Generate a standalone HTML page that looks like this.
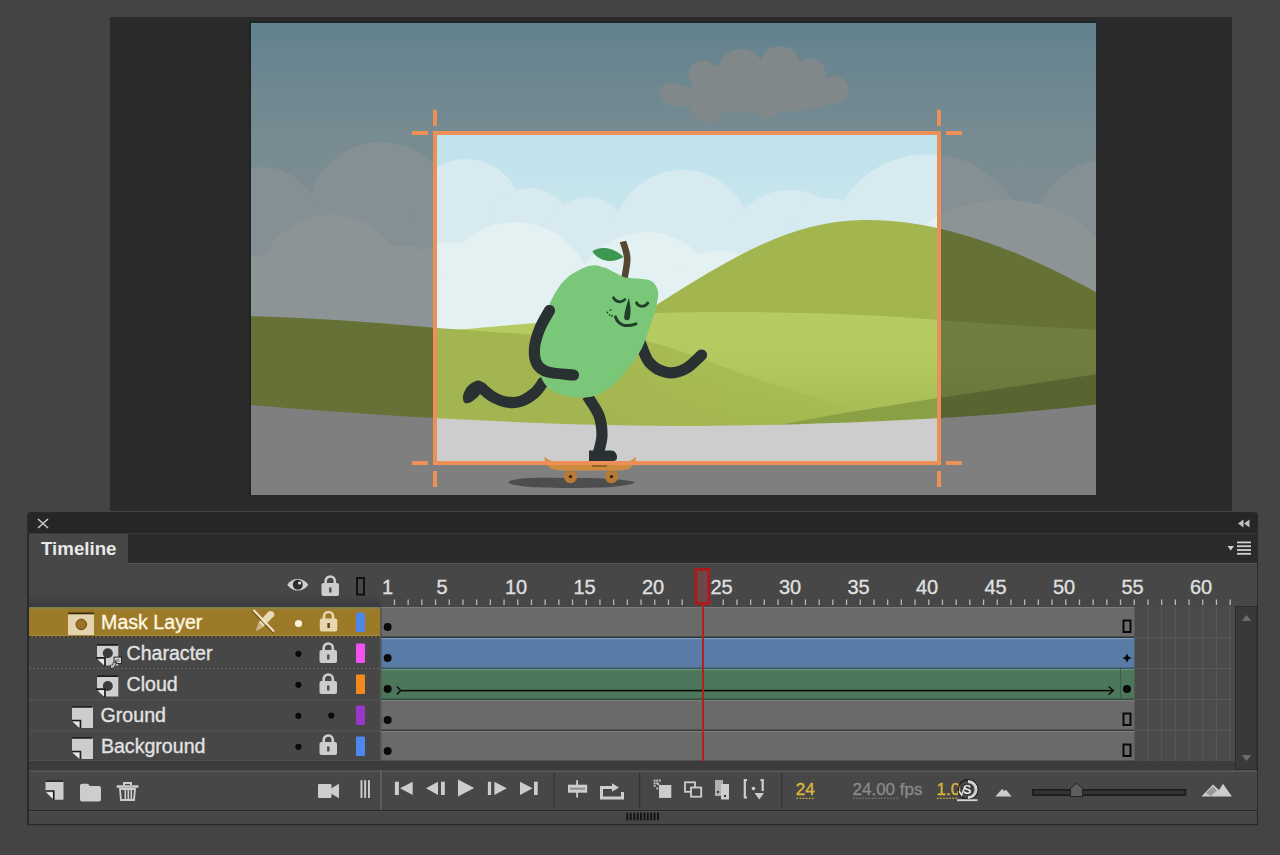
<!DOCTYPE html>
<html><head><meta charset="utf-8">
<style>
html,body{margin:0;padding:0;}
body{width:1280px;height:855px;overflow:hidden;position:relative;background:#444444;font-family:"Liberation Sans",sans-serif;}
.a{position:absolute;}
</style></head><body>
<div class="a" style="left:110px;top:17px;width:1122px;height:494px;background:#2a2a2a"></div>
<svg width="1280" height="510" viewBox="0 0 1280 510" style="position:absolute;left:0;top:0">
<defs>
<linearGradient id="sky" x1="0" y1="23" x2="0" y2="330" gradientUnits="userSpaceOnUse">
<stop offset="0" stop-color="#9cd3e6"/><stop offset="0.37" stop-color="#c0e2ec"/><stop offset="1" stop-color="#d4eaee"/></linearGradient>
<linearGradient id="hill2" x1="0" y1="310" x2="0" y2="425" gradientUnits="userSpaceOnUse">
<stop offset="0" stop-color="#b6cb63"/><stop offset="0.4" stop-color="#b4ca60"/><stop offset="1" stop-color="#a6ba53"/></linearGradient>
<linearGradient id="lh" x1="560" y1="0" x2="900" y2="0" gradientUnits="userSpaceOnUse"><stop offset="0" stop-color="#a3b550" stop-opacity="1"/><stop offset="1" stop-color="#a3b550" stop-opacity="0.25"/></linearGradient>
<clipPath id="stage"><rect x="251" y="23" width="845" height="472"/></clipPath>
</defs>
<rect x="249" y="21" width="847" height="474" fill="#1d2529"/>
<g clip-path="url(#stage)">
<rect x="251" y="23" width="845" height="472" fill="url(#sky)"/>
<circle cx="703" cy="75" r="14.5" fill="#cfdcde"/>
<circle cx="741" cy="72" r="23" fill="#cfdcde"/>
<circle cx="780" cy="66" r="20" fill="#cfdcde"/>
<circle cx="810" cy="74" r="15.5" fill="#cfdcde"/>
<circle cx="835" cy="90" r="13.5" fill="#cfdcde"/>
<circle cx="708" cy="106" r="17" fill="#cfdcde"/>
<circle cx="766" cy="102" r="16" fill="#cfdcde"/>
<ellipse cx="755" cy="98" rx="82" ry="15" fill="#cfdcde"/>
<path d="M692 84 L703 66 L722 66 L741 56 L760 61 L780 52 L800 62 L818 70 L832 84 L830 100 L695 100 Z" fill="#cfdcde"/>
<ellipse cx="677" cy="95" rx="18.5" ry="11" transform="rotate(15 677 95)" fill="#cfdcde"/>
<circle cx="381" cy="215" r="73" fill="#d6eaef"/>
<circle cx="262" cy="225" r="58" fill="#d6eaef"/>
<circle cx="466" cy="215" r="56" fill="#d6eaef"/>
<circle cx="530" cy="230" r="42" fill="#d6eaef"/>
<circle cx="588" cy="237" r="40" fill="#d6eaef"/>
<circle cx="682" cy="240" r="70" fill="#d6eaef"/>
<circle cx="790" cy="255" r="65" fill="#d6eaef"/>
<circle cx="829" cy="238" r="40" fill="#d6eaef"/>
<circle cx="928" cy="254" r="100" fill="#d6eaef"/>
<circle cx="1110" cy="235" r="76" fill="#d6eaef"/>
<rect x="251" y="230" width="845" height="110" fill="#d6eaef"/>
<circle cx="331" cy="290" r="75" fill="#e3f1f3"/>
<circle cx="262" cy="300" r="45" fill="#e3f1f3"/>
<circle cx="400" cy="300" r="55" fill="#e3f1f3"/>
<circle cx="451" cy="290" r="48" fill="#e3f1f3"/>
<circle cx="515" cy="300" r="78" fill="#e3f1f3"/>
<circle cx="646" cy="305" r="73" fill="#e3f1f3"/>
<circle cx="720" cy="300" r="50" fill="#e3f1f3"/>
<ellipse cx="1003" cy="290" rx="115" ry="90" fill="#e3f1f3"/>
<rect x="251" y="275" width="845" height="70" fill="#e3f1f3"/>
<path d="M600 340 C 700 280, 770 222, 862 220 C 950 218, 1040 260, 1110 300 L1110 340 Z" fill="#a2b54f"/>
<path d="M240 335 C 380 333, 430 331, 460 329.5 C 500 326, 570 320, 657 313 C 760 310, 880 314, 937 320 C 1000 325, 1060 328, 1110 330 L1110 430 L240 430 Z" fill="url(#hill2)"/>
<path d="M240 316 C 330 318, 400 325, 437 328 C 480 331, 560 337, 650 342 C 690 352, 720 367, 760 380 C 800 393, 850 408, 905 430 L240 430 Z" fill="url(#lh)"/>
<path d="M770 427 C 850 410, 960 395, 1110 372 L1110 430 Z" fill="#8aa044"/>
<path d="M240 404 C 400 418, 560 426, 700 426 C 820 425, 937 419, 1000 414 C 1050 410, 1080 406, 1110 403 L1110 500 L240 500 Z" fill="#cdcdcd"/>
<path fill-rule="evenodd" d="M251 23 H1096 V495 H251 Z M435 133 V463 H939 V133 Z" fill="rgb(18,20,22)" fill-opacity="0.42"/>
</g>
<path d="M508 482 C 515 477, 540 477.5, 565 478 C 590 478, 620 478, 635 482 C 630 487, 600 488, 570 488 C 540 488, 512 487, 508 482 Z" fill="#4d4d4d"/>
<circle cx="570.5" cy="476.6" r="6.6" fill="#b97a36"/><circle cx="570.5" cy="476.6" r="1.7" fill="#2e2010"/>
<circle cx="611.5" cy="476.6" r="6.6" fill="#b97a36"/><circle cx="611.5" cy="476.6" r="1.7" fill="#2e2010"/>
<path d="M544.5 456.5 C 547 459, 550 461, 553 461 L628 461 C 631 461, 634 459, 636 456.5 C 636 461, 634 465, 630 468 C 627 470, 622 470.5, 615 470.5 L565 470.5 C 558 470.5, 553 470, 550 468 C 546 465, 544.5 461, 544.5 456.5 Z" fill="#cf8b3d"/>
<rect x="592" y="465" width="15" height="2" fill="#6a4a22" opacity="0.6"/>
<path d="M587.3 396.0 C589.2 399.2 596.3 408.6 598.8 415.1 C601.2 421.6 602.0 428.8 602.0 434.8 C602.0 440.8 599.9 447.2 598.8 451.2 C597.7 455.2 596.0 457.7 595.5 459.0 " fill="none" stroke="#2a3132" stroke-width="11.2" stroke-linecap="butt"/>
<path d="M589 450.4 H611 C 615 450.4, 617 454, 617 457 C 617 460, 615.5 461, 613 461 H589 Z" fill="#2a3132"/>
<path d="M543.0 382.3 C541.6 384.1 538.2 389.9 534.4 393.1 C530.6 396.3 525.0 400.0 520.3 401.5 C515.6 403.0 510.9 402.8 506.2 402.0 C501.6 401.2 496.4 398.9 492.2 396.5 C488.0 394.1 482.9 389.0 481.0 387.5 " fill="none" stroke="#2a3132" stroke-width="11.2" stroke-linecap="round"/>
<path d="M478.0 380.5 C480.7 380.3 483.7 382.8 484.0 385.0 C484.3 387.2 482.0 391.2 480.0 394.0 C478.0 396.8 474.5 400.0 472.0 401.5 C469.5 403.0 466.5 403.9 465.0 403.0 C463.5 402.1 462.5 398.8 463.0 396.0 C463.5 393.2 465.5 388.6 468.0 386.0 C470.5 383.4 475.3 380.7 478.0 380.5 Z" fill="#2a3132"/>
<path d="M639.7 341.0 C641.3 344.6 645.0 357.4 649.5 362.7 C654.0 367.9 661.1 371.4 667.0 372.5 C672.9 373.6 679.2 371.9 685.0 369.0 C690.8 366.1 698.8 357.3 701.5 355.0 " fill="none" stroke="#2a3132" stroke-width="11.2" stroke-linecap="round"/>
<path d="M624.5 278.0 C625.0 274.7 627.5 264.1 627.2 258.0 C627.0 251.9 623.7 244.2 623.0 241.5 " fill="none" stroke="#574731" stroke-width="6.6"/>
<path d="M592.3 251.5 C 598 246.5, 612 245.5, 623.5 257 C 613 263.5, 600 262.5, 592.3 251.5 Z" fill="#3c9850"/>
<path d="M589.5 265.8 C595.8 264.0 600.0 266.4 604.2 267.5 C608.4 268.6 611.2 270.9 614.7 272.5 C618.2 274.1 621.1 276.3 625.3 277.4 C629.5 278.4 635.5 278.1 640.0 278.8 C644.5 279.5 649.0 279.5 652.0 281.5 C655.0 283.5 657.1 287.3 657.9 291.0 C658.7 294.7 658.0 298.1 656.8 303.7 C655.6 309.3 653.0 317.3 650.5 324.7 C648.0 332.1 645.7 340.7 642.0 347.9 C638.3 355.1 633.2 361.6 628.2 368.0 C623.2 374.4 617.0 381.6 612.0 386.0 C607.0 390.4 602.7 392.6 598.0 394.5 C593.3 396.4 589.5 397.3 584.0 397.5 C578.5 397.7 570.3 396.7 565.0 395.5 C559.7 394.3 555.6 392.8 552.0 390.5 C548.4 388.2 545.4 385.6 543.2 381.6 C541.0 377.7 539.5 372.4 539.0 366.8 C538.5 361.2 539.3 354.9 540.0 347.9 C540.7 340.9 541.3 332.8 543.2 324.7 C545.1 316.6 547.8 307.2 551.6 299.5 C555.5 291.8 560.0 284.0 566.3 278.4 C572.6 272.8 583.2 267.6 589.5 265.8 Z" fill="#7bc77a"/>
<path d="M549.5 310.5 C547.9 313.4 542.5 321.8 540.0 328.0 C537.5 334.2 535.0 342.0 534.5 348.0 C534.0 354.0 534.8 360.0 537.0 364.0 C539.2 368.0 541.9 370.2 548.0 372.0 C554.1 373.8 569.2 374.5 573.5 375.0 " fill="none" stroke="#2a3132" stroke-width="11.2" stroke-linecap="round"/>
<path d="M613.5 297.8 C 615.5 302.5, 622 303, 624.8 299.5" fill="none" stroke="#21402a" stroke-width="2.8" stroke-linecap="round"/>
<path d="M636.5 302.8 C 638.5 307.5, 645 307.5, 647.8 303" fill="none" stroke="#21402a" stroke-width="2.8" stroke-linecap="round"/>
<path d="M628.8 298 C 630.5 305, 631.5 313, 629.5 319 C 627.5 321.5, 623.5 320.5, 624.2 316 C 625 310, 627 304, 628.8 298 Z" fill="#21402a"/>
<path d="M615.5 317 C 618 324.5, 625 328, 636 323.8" fill="none" stroke="#21402a" stroke-width="3" stroke-linecap="round"/>
<circle cx="607.4" cy="312.5" r="0.9" fill="#21402a"/>
<circle cx="610.5" cy="310.2" r="0.9" fill="#21402a"/>
<circle cx="609.6" cy="314.8" r="0.9" fill="#21402a"/>
<circle cx="612" cy="316" r="0.9" fill="#21402a"/>
<rect x="435" y="133" width="504" height="330" fill="none" stroke="#ec9057" stroke-width="4"/>
<rect x="433" y="110" width="4" height="16" fill="#ec9057"/>
<rect x="412" y="131" width="16" height="4" fill="#ec9057"/>
<rect x="937" y="110" width="4" height="16" fill="#ec9057"/>
<rect x="946" y="131" width="16" height="4" fill="#ec9057"/>
<rect x="412" y="461" width="16" height="4" fill="#ec9057"/>
<rect x="433" y="471" width="4" height="16" fill="#ec9057"/>
<rect x="946" y="461" width="16" height="4" fill="#ec9057"/>
<rect x="937" y="471" width="4" height="16" fill="#ec9057"/>
</svg>
<svg width="1280" height="855" viewBox="0 0 1280 855" style="position:absolute;left:0;top:0" font-family="Liberation Sans, sans-serif">
<path d="M27 824.5 V516 A4 4 0 0 1 31 512 H1254 A4 4 0 0 1 1258 516 V824.5 Z" fill="#2a2a2a"/>
<rect x="29" y="534" width="1228" height="290" fill="#474747"/>
<path d="M29 533 V517 A4 4 0 0 1 33 513 H1253 A4 4 0 0 1 1257 517 V533 Z" fill="#262626"/>
<rect x="29" y="533" width="1228" height="1" fill="#3a3a3a"/>
<path d="M38 519 L48 528 M48 519 L38 528" stroke="#c8c8c8" stroke-width="1.6"/>
<path d="M1243.5 519.5 L1238 523.5 L1243.5 527.5 Z M1249.5 519.5 L1244 523.5 L1249.5 527.5 Z" fill="#c0c0c0"/>
<rect x="128" y="534" width="1129" height="29" fill="#2b2b2b"/>
<rect x="128" y="563" width="1129" height="1" fill="#555555"/>
<text x="41" y="554.7" font-size="18.7" font-weight="bold" fill="#e8e8e8">Timeline</text>
<path d="M1227.5 546 L1234 546 L1230.75 550.5 Z" fill="#d0d0d0"/>
<rect x="1237" y="541.5" width="14" height="1.8" fill="#d0d0d0"/>
<rect x="1237" y="545.3" width="14" height="1.8" fill="#d0d0d0"/>
<rect x="1237" y="549.1" width="14" height="1.8" fill="#d0d0d0"/>
<rect x="1237" y="552.9" width="14" height="1.8" fill="#d0d0d0"/>
<defs><linearGradient id="hb" x1="0" y1="594" x2="0" y2="607" gradientUnits="userSpaceOnUse"><stop offset="0" stop-color="#474747"/><stop offset="1" stop-color="#3a3a40"/></linearGradient></defs>
<rect x="29" y="594" width="351" height="13" fill="url(#hb)"/>
<path d="M287.3 584.7 C 292 577, 303.5 577, 308.3 584.7 C 303.5 592.4, 292 592.4, 287.3 584.7 Z" fill="#cfcfcf"/>
<circle cx="297.8" cy="584.7" r="5" fill="#2d2d2d"/><circle cx="299.6" cy="583" r="1.6" fill="#e0e0e0"/>
<path d="M325.7 583.5 V581 A4.55 4.55 0 0 1 334.8 581 V583.5" fill="none" stroke="#cdcdcd" stroke-width="2.6"/><rect x="321.5" y="583" width="17.5" height="13" rx="2" fill="#cdcdcd"/><rect x="329.1" y="587.5" width="2.4" height="5" fill="#4a4a4a"/>
<rect x="357" y="578" width="7" height="16.6" fill="none" stroke="#111" stroke-width="2"/>
<text x="382.0" y="594.4" font-size="20" fill="#e0e0e0" stroke="#e0e0e0" stroke-width="0.3">1</text>
<text x="436.5" y="594.4" font-size="20" fill="#e0e0e0" stroke="#e0e0e0" stroke-width="0.3">5</text>
<text x="505.0" y="594.4" font-size="20" fill="#e0e0e0" stroke="#e0e0e0" stroke-width="0.3">10</text>
<text x="573.5" y="594.4" font-size="20" fill="#e0e0e0" stroke="#e0e0e0" stroke-width="0.3">15</text>
<text x="642.0" y="594.4" font-size="20" fill="#e0e0e0" stroke="#e0e0e0" stroke-width="0.3">20</text>
<text x="710.5" y="594.4" font-size="20" fill="#e0e0e0" stroke="#e0e0e0" stroke-width="0.3">25</text>
<text x="779.0" y="594.4" font-size="20" fill="#e0e0e0" stroke="#e0e0e0" stroke-width="0.3">30</text>
<text x="847.5" y="594.4" font-size="20" fill="#e0e0e0" stroke="#e0e0e0" stroke-width="0.3">35</text>
<text x="916.0" y="594.4" font-size="20" fill="#e0e0e0" stroke="#e0e0e0" stroke-width="0.3">40</text>
<text x="984.5" y="594.4" font-size="20" fill="#e0e0e0" stroke="#e0e0e0" stroke-width="0.3">45</text>
<text x="1053.0" y="594.4" font-size="20" fill="#e0e0e0" stroke="#e0e0e0" stroke-width="0.3">50</text>
<text x="1121.5" y="594.4" font-size="20" fill="#e0e0e0" stroke="#e0e0e0" stroke-width="0.3">55</text>
<text x="1190.0" y="594.4" font-size="20" fill="#e0e0e0" stroke="#e0e0e0" stroke-width="0.3">60</text>
<rect x="393.8" y="599.5" width="1.3" height="5.5" fill="#b8b8b8"/>
<rect x="407.5" y="599.5" width="1.3" height="5.5" fill="#b8b8b8"/>
<rect x="421.2" y="599.5" width="1.3" height="5.5" fill="#b8b8b8"/>
<rect x="434.9" y="599.5" width="1.3" height="5.5" fill="#b8b8b8"/>
<rect x="448.6" y="599.5" width="1.3" height="5.5" fill="#b8b8b8"/>
<rect x="462.3" y="599.5" width="1.3" height="5.5" fill="#b8b8b8"/>
<rect x="476.0" y="599.5" width="1.3" height="5.5" fill="#b8b8b8"/>
<rect x="489.7" y="599.5" width="1.3" height="5.5" fill="#b8b8b8"/>
<rect x="503.4" y="599.5" width="1.3" height="5.5" fill="#b8b8b8"/>
<rect x="517.1" y="599.5" width="1.3" height="5.5" fill="#b8b8b8"/>
<rect x="530.8" y="599.5" width="1.3" height="5.5" fill="#b8b8b8"/>
<rect x="544.5" y="599.5" width="1.3" height="5.5" fill="#b8b8b8"/>
<rect x="558.2" y="599.5" width="1.3" height="5.5" fill="#b8b8b8"/>
<rect x="571.9" y="599.5" width="1.3" height="5.5" fill="#b8b8b8"/>
<rect x="585.6" y="599.5" width="1.3" height="5.5" fill="#b8b8b8"/>
<rect x="599.3" y="599.5" width="1.3" height="5.5" fill="#b8b8b8"/>
<rect x="613.0" y="599.5" width="1.3" height="5.5" fill="#b8b8b8"/>
<rect x="626.7" y="599.5" width="1.3" height="5.5" fill="#b8b8b8"/>
<rect x="640.4" y="599.5" width="1.3" height="5.5" fill="#b8b8b8"/>
<rect x="654.1" y="599.5" width="1.3" height="5.5" fill="#b8b8b8"/>
<rect x="667.8" y="599.5" width="1.3" height="5.5" fill="#b8b8b8"/>
<rect x="681.5" y="599.5" width="1.3" height="5.5" fill="#b8b8b8"/>
<rect x="695.2" y="599.5" width="1.3" height="5.5" fill="#b8b8b8"/>
<rect x="708.9" y="599.5" width="1.3" height="5.5" fill="#b8b8b8"/>
<rect x="722.6" y="599.5" width="1.3" height="5.5" fill="#b8b8b8"/>
<rect x="736.3" y="599.5" width="1.3" height="5.5" fill="#b8b8b8"/>
<rect x="750.0" y="599.5" width="1.3" height="5.5" fill="#b8b8b8"/>
<rect x="763.7" y="599.5" width="1.3" height="5.5" fill="#b8b8b8"/>
<rect x="777.4" y="599.5" width="1.3" height="5.5" fill="#b8b8b8"/>
<rect x="791.1" y="599.5" width="1.3" height="5.5" fill="#b8b8b8"/>
<rect x="804.8" y="599.5" width="1.3" height="5.5" fill="#b8b8b8"/>
<rect x="818.5" y="599.5" width="1.3" height="5.5" fill="#b8b8b8"/>
<rect x="832.2" y="599.5" width="1.3" height="5.5" fill="#b8b8b8"/>
<rect x="845.9" y="599.5" width="1.3" height="5.5" fill="#b8b8b8"/>
<rect x="859.6" y="599.5" width="1.3" height="5.5" fill="#b8b8b8"/>
<rect x="873.3" y="599.5" width="1.3" height="5.5" fill="#b8b8b8"/>
<rect x="887.0" y="599.5" width="1.3" height="5.5" fill="#b8b8b8"/>
<rect x="900.7" y="599.5" width="1.3" height="5.5" fill="#b8b8b8"/>
<rect x="914.4" y="599.5" width="1.3" height="5.5" fill="#b8b8b8"/>
<rect x="928.1" y="599.5" width="1.3" height="5.5" fill="#b8b8b8"/>
<rect x="941.8" y="599.5" width="1.3" height="5.5" fill="#b8b8b8"/>
<rect x="955.5" y="599.5" width="1.3" height="5.5" fill="#b8b8b8"/>
<rect x="969.2" y="599.5" width="1.3" height="5.5" fill="#b8b8b8"/>
<rect x="982.9" y="599.5" width="1.3" height="5.5" fill="#b8b8b8"/>
<rect x="996.6" y="599.5" width="1.3" height="5.5" fill="#b8b8b8"/>
<rect x="1010.3" y="599.5" width="1.3" height="5.5" fill="#b8b8b8"/>
<rect x="1024.0" y="599.5" width="1.3" height="5.5" fill="#b8b8b8"/>
<rect x="1037.7" y="599.5" width="1.3" height="5.5" fill="#b8b8b8"/>
<rect x="1051.4" y="599.5" width="1.3" height="5.5" fill="#b8b8b8"/>
<rect x="1065.1" y="599.5" width="1.3" height="5.5" fill="#b8b8b8"/>
<rect x="1078.8" y="599.5" width="1.3" height="5.5" fill="#b8b8b8"/>
<rect x="1092.5" y="599.5" width="1.3" height="5.5" fill="#b8b8b8"/>
<rect x="1106.2" y="599.5" width="1.3" height="5.5" fill="#b8b8b8"/>
<rect x="1119.9" y="599.5" width="1.3" height="5.5" fill="#b8b8b8"/>
<rect x="1133.6" y="599.5" width="1.3" height="5.5" fill="#b8b8b8"/>
<rect x="1147.3" y="599.5" width="1.3" height="5.5" fill="#b8b8b8"/>
<rect x="1161.0" y="599.5" width="1.3" height="5.5" fill="#b8b8b8"/>
<rect x="1174.7" y="599.5" width="1.3" height="5.5" fill="#b8b8b8"/>
<rect x="1188.4" y="599.5" width="1.3" height="5.5" fill="#b8b8b8"/>
<rect x="1202.1" y="599.5" width="1.3" height="5.5" fill="#b8b8b8"/>
<rect x="1215.8" y="599.5" width="1.3" height="5.5" fill="#b8b8b8"/>
<rect x="1229.5" y="599.5" width="1.3" height="5.5" fill="#b8b8b8"/>
<rect x="29" y="607" width="351" height="154" fill="#474747"/>
<rect x="29" y="607" width="351" height="30" fill="#9d7a27"/>
<rect x="29" y="607" width="351" height="1.6" fill="#7f7c4c"/>
<rect x="29" y="608.6" width="351" height="1" fill="#9a8444"/>
<rect x="29" y="635" width="351" height="1.2" fill="#9c8a4a"/>
<rect x="29" y="699.5" width="351" height="1" fill="#585858"/>
<rect x="29" y="730.5" width="351" height="1" fill="#585858"/>
<rect x="29" y="760.5" width="351" height="1" fill="#585858"/>
<rect x="29" y="636.2" width="351" height="1.6" fill="#6a5e3a"/><line x1="29" y1="637" x2="380" y2="637" stroke="#2e2c28" stroke-width="1.6" stroke-dasharray="2.2 1.8"/>
<line x1="29" y1="668.5" x2="380" y2="668.5" stroke="#666" stroke-width="1.2" stroke-dasharray="2 2"/>
<text x="101.1" y="629.3" font-size="19.6" fill="#fff7e2" stroke="#fff7e2" stroke-width="0.35">Mask Layer</text>
<text x="126.5" y="660.3" font-size="19.6" fill="#e2e2e2" stroke="#e2e2e2" stroke-width="0.35">Character</text>
<text x="126.5" y="691.3" font-size="19.6" fill="#e2e2e2" stroke="#e2e2e2" stroke-width="0.35">Cloud</text>
<text x="100.6" y="722.3" font-size="19.6" fill="#e2e2e2" stroke="#e2e2e2" stroke-width="0.35">Ground</text>
<text x="100.9" y="753.3" font-size="19.6" fill="#e2e2e2" stroke="#e2e2e2" stroke-width="0.35">Background</text>
<rect x="68" y="613.5" width="26" height="21.5" fill="#e3d4ad"/>
<rect x="68" y="612.5" width="26" height="1.8" fill="#3a2d10"/>
<circle cx="81.3" cy="624.4" r="5.3" fill="#9c7326" stroke="#6a4c14" stroke-width="1"/>
<path d="M97 644.6 H118.3 V665.4 H105 L97 657.9 Z" fill="#cfcfcf"/>
<rect x="97" y="644.0" width="21.3" height="1.8" fill="#1e1e1e"/>
<circle cx="107.8" cy="653.3000000000001" r="5" fill="#3c3c3c"/>
<path d="M96 657.9 H105 V666.1" fill="none" stroke="#1e1e1e" stroke-width="1.7"/>
<path d="M97.5 659.1999999999999 L104 659.1999999999999 L104 665.2 Z" fill="#e6e6e6"/>
<rect x="114" y="657.1" width="7.5" height="6.5" fill="#cfcfcf" stroke="#2a2a2a" stroke-width="1"/>
<rect x="116.5" y="659.1" width="3" height="2.5" fill="#9a9a9a"/>
<path d="M110.5 668.1 L110.5 665.1 L113 665.1 L113 662.6 L115.5 662.6 L115.5 660.1 L117 661.6 L113.5 668.1 Z" fill="#d8d8d8" stroke="#2a2a2a" stroke-width="0.8"/>
<path d="M97 675.8 H118.3 V696.5999999999999 H105 L97 689.0999999999999 Z" fill="#cfcfcf"/>
<rect x="97" y="675.1999999999999" width="21.3" height="1.8" fill="#1e1e1e"/>
<circle cx="107.8" cy="686.0" r="5" fill="#3c3c3c"/>
<path d="M96 689.0999999999999 H105 V697.3" fill="none" stroke="#1e1e1e" stroke-width="1.7"/>
<path d="M97.5 690.3999999999999 L104 690.3999999999999 L104 696.4 Z" fill="#e6e6e6"/>
<path d="M72 707.5 H93 V728 H80 L72 721 Z" fill="#cdcdcd"/>
<rect x="72" y="706" width="20" height="1.6" fill="#1e1e1e"/>
<path d="M72 720.5 H80.5 V728" fill="none" stroke="#1e1e1e" stroke-width="1.6"/>
<path d="M73 722 L79 722 L79 727.5 Z" fill="#e6e6e6"/>
<path d="M72 738.5 H93 V759 H80 L72 752 Z" fill="#cdcdcd"/>
<rect x="72" y="737" width="20" height="1.6" fill="#1e1e1e"/>
<path d="M72 751.5 H80.5 V759" fill="none" stroke="#1e1e1e" stroke-width="1.6"/>
<path d="M73 753 L79 753 L79 758.5 Z" fill="#e6e6e6"/>
<path d="M256 631 L259 622 L268 612 C 270 610, 273 611, 274 613 C 275 615, 274 617, 272 618 L263 627 Z" fill="#e8d8b4"/>
<path d="M256 631 L259 622 L263 627 Z" fill="#c8b48a"/>
<path d="M253.5 610 L274 631.5" stroke="#f2e4c4" stroke-width="2"/>
<path d="M252.5 611.5 L273 633" stroke="#5a4210" stroke-width="1"/>
<circle cx="298.5" cy="623.5" r="3.6" fill="#fbf3dc"/>
<circle cx="298.4" cy="653.8" r="3.1" fill="#0a0a0a"/>
<circle cx="298.4" cy="684.8" r="3.1" fill="#0a0a0a"/>
<circle cx="298.4" cy="715.8" r="3.1" fill="#0a0a0a"/>
<circle cx="298.4" cy="746.8" r="3.1" fill="#0a0a0a"/>
<circle cx="331.3" cy="715.6" r="3.1" fill="#0a0a0a"/>
<path d="M324.0 619.0 V616.5 A4.55 4.55 0 0 1 333.1 616.5 V619.0" fill="none" stroke="#e8d6ae" stroke-width="2.6"/><rect x="319.8" y="618.5" width="17.5" height="13" rx="2" fill="#e8d6ae"/><rect x="327.40000000000003" y="623.0" width="2.4" height="5" fill="#5a4210"/>
<path d="M323.7 650.5 V648 A4.55 4.55 0 0 1 332.8 648 V650.5" fill="none" stroke="#cdcdcd" stroke-width="2.6"/><rect x="319.5" y="650" width="17.5" height="13" rx="2" fill="#cdcdcd"/><rect x="327.1" y="654.5" width="2.4" height="5" fill="#4a4a4a"/>
<path d="M323.7 681.5 V679 A4.55 4.55 0 0 1 332.8 679 V681.5" fill="none" stroke="#cdcdcd" stroke-width="2.6"/><rect x="319.5" y="681" width="17.5" height="13" rx="2" fill="#cdcdcd"/><rect x="327.1" y="685.5" width="2.4" height="5" fill="#4a4a4a"/>
<path d="M323.7 742.5 V740 A4.55 4.55 0 0 1 332.8 740 V742.5" fill="none" stroke="#cdcdcd" stroke-width="2.6"/><rect x="319.5" y="742" width="17.5" height="13" rx="2" fill="#cdcdcd"/><rect x="327.1" y="746.5" width="2.4" height="5" fill="#4a4a4a"/>
<rect x="356" y="612.6" width="9" height="19.4" rx="1" fill="#4f86ee"/>
<rect x="356" y="643.6" width="9" height="19.4" rx="1" fill="#f252f0"/>
<rect x="356" y="674.6" width="9" height="19.4" rx="1" fill="#f58a1c"/>
<rect x="356" y="705.6" width="9" height="19.4" rx="1" fill="#9838c8"/>
<rect x="356" y="736.6" width="9" height="19.4" rx="1" fill="#4f86ee"/>
<rect x="380" y="607" width="1" height="154" fill="#5a5a5a"/>
<rect x="381" y="607" width="854" height="154" fill="#4b4b4b"/>
<rect x="1133.7" y="607" width="1" height="154" fill="#5a5a5a"/>
<rect x="1147.4" y="607" width="1" height="154" fill="#5a5a5a"/>
<rect x="1161.1" y="607" width="1" height="154" fill="#5a5a5a"/>
<rect x="1174.8" y="607" width="1" height="154" fill="#5a5a5a"/>
<rect x="1188.5" y="607" width="1" height="154" fill="#5a5a5a"/>
<rect x="1202.2" y="607" width="1" height="154" fill="#5a5a5a"/>
<rect x="1215.9" y="607" width="1" height="154" fill="#5a5a5a"/>
<rect x="1229.6" y="607" width="1" height="154" fill="#5a5a5a"/>
<rect x="1243.3" y="607" width="1" height="154" fill="#5a5a5a"/>
<rect x="1134" y="637" width="100" height="1" fill="#575757"/>
<rect x="1134" y="668" width="100" height="1" fill="#575757"/>
<rect x="1134" y="699" width="100" height="1" fill="#575757"/>
<rect x="1134" y="730" width="100" height="1" fill="#575757"/>
<rect x="1134" y="761" width="100" height="1" fill="#575757"/>
<rect x="381.5" y="607" width="752.7" height="31" fill="#6a6a6a"/>
<rect x="381.5" y="607" width="752.7" height="1.2" fill="#7a7a7a"/>
<rect x="381.5" y="636.5" width="752.7" height="1.5" fill="#2f3338"/>
<circle cx="387.65" cy="627" r="4" fill="#0a0a0a"/>
<rect x="381.5" y="638" width="752.7" height="31" fill="#587ca6"/>
<rect x="381.5" y="638" width="752.7" height="1.2" fill="#7b9cc2"/>
<rect x="381.5" y="667.5" width="752.7" height="1.5" fill="#3a5566"/>
<circle cx="387.65" cy="658" r="4" fill="#0a0a0a"/>
<rect x="381.5" y="669" width="752.7" height="31" fill="#4c775b"/>
<rect x="381.5" y="669" width="752.7" height="1.2" fill="#6a9277"/>
<rect x="381.5" y="698.5" width="752.7" height="1.5" fill="#354f40"/>
<circle cx="387.65" cy="689" r="4" fill="#0a0a0a"/>
<rect x="381.5" y="700" width="752.7" height="31" fill="#6a6a6a"/>
<rect x="381.5" y="700" width="752.7" height="1.2" fill="#7a7a7a"/>
<rect x="381.5" y="729.5" width="752.7" height="1.5" fill="#3a3a3a"/>
<circle cx="387.65" cy="720" r="4" fill="#0a0a0a"/>
<rect x="381.5" y="731" width="752.7" height="31" fill="#6a6a6a"/>
<rect x="381.5" y="731" width="752.7" height="1.2" fill="#7a7a7a"/>
<rect x="381.5" y="760.5" width="752.7" height="1.5" fill="#3a3a3a"/>
<circle cx="387.65" cy="751" r="4" fill="#0a0a0a"/>
<rect x="1123.5" y="620.5" width="7" height="11.5" fill="none" stroke="#0a0a0a" stroke-width="2"/>
<rect x="1123.5" y="713.5" width="7" height="11.5" fill="none" stroke="#0a0a0a" stroke-width="2"/>
<rect x="1123.5" y="744.5" width="7" height="11.5" fill="none" stroke="#0a0a0a" stroke-width="2"/>
<path d="M1127 653.5 L1129.2 658 L1127 662.5 L1124.8 658 Z M1122.5 658 L1127 655.8 L1131.5 658 L1127 660.2 Z" fill="#0a0a0a"/>
<rect x="1120" y="669" width="1" height="30" fill="#3c5e48"/>
<circle cx="1127" cy="689" r="4" fill="#0a0a0a"/>
<path d="M397 686.5 L400.5 690.5 L397 694.5" fill="none" stroke="#0a0a0a" stroke-width="1.3"/>
<rect x="400" y="689.8" width="713" height="1.6" fill="#0a0a0a"/>
<path d="M1108.5 686.5 L1113.5 690.6 L1108.5 694.7" fill="none" stroke="#0a0a0a" stroke-width="1.3"/>
<rect x="702" y="604" width="2" height="157" fill="#b4201c"/>
<rect x="695.9" y="569.5" width="13" height="34" fill="#8a4a4a" fill-opacity="0.55" stroke="#a81c1c" stroke-width="3"/>
<rect x="1235.5" y="606.5" width="21.5" height="163" fill="#393939" stroke="#2b2b2b" stroke-width="1"/>
<path d="M1241.5 621 L1246.5 615 L1251.5 621 Z" fill="#6a6a6a"/>
<path d="M1241.5 755 L1246.5 761 L1251.5 755 Z" fill="#6a6a6a"/>
<rect x="29" y="761" width="1206" height="9.5" fill="#3c3c3c"/>
<rect x="29" y="770.5" width="1228" height="1.3" fill="#5d5d5d"/>
<rect x="29" y="772" width="1228" height="38" fill="#474747"/>
<rect x="29" y="810" width="1228" height="1.2" fill="#262626"/>
<rect x="29" y="811.2" width="1228" height="12.8" fill="#464646"/>
<rect x="29" y="811.2" width="1228" height="1" fill="#4f4f4f"/>
<rect x="27" y="824" width="1231" height="1.2" fill="#2a2a2a"/>
<rect x="380.3" y="770" width="1.2" height="40" fill="#6a6a6a"/>
<rect x="553.5" y="773" width="1.2" height="35" fill="#333"/>
<rect x="639" y="773" width="1.2" height="35" fill="#333"/>
<rect x="781.2" y="773" width="1.2" height="35" fill="#333"/>
<path d="M45.5 781.3 H63.5 V799.8 H54 L45.5 791.5 Z" fill="#cdcdcd"/>
<path d="M45.5 791 H53.8 V799.8" fill="none" stroke="#1e1e1e" stroke-width="1.6"/>
<path d="M46.5 792.5 H52.5 V798.5 Z" fill="#e8e8e8"/>
<rect x="45.5" y="780.5" width="18" height="1.4" fill="#1e1e1e"/>
<path d="M80 786 C80 784.5 81 783.7 82.5 783.7 H87 C88.3 783.7 89 784.5 89.5 786 H99 C100.3 786 101 787 101 788.5 V799 C101 800.7 100.3 801.5 99 801.5 H82 C80.7 801.5 80 800.7 80 799 Z" fill="#cdcdcd"/>
<path d="M117.7 786.5 H137.4" stroke="#cdcdcd" stroke-width="2.6" stroke-linecap="round"/>
<path d="M124 785 V783 H131 V785" fill="none" stroke="#cdcdcd" stroke-width="2"/>
<path d="M120 789 H135 L134 800 H121 Z" fill="none" stroke="#cdcdcd" stroke-width="1.8"/>
<rect x="124.5" y="790" width="1.6" height="9" fill="#cdcdcd"/>
<rect x="127.5" y="790" width="1.6" height="9" fill="#cdcdcd"/>
<rect x="130.5" y="790" width="1.6" height="9" fill="#cdcdcd"/>
<rect x="318" y="784" width="13.5" height="14" rx="1" fill="#cdcdcd"/>
<path d="M331 788.5 L339 783.8 V798.2 L331 793.5 Z" fill="#cdcdcd"/>
<rect x="360.5" y="780.2" width="1.9" height="17.8" fill="#cdcdcd"/>
<rect x="364.2" y="780.2" width="1.9" height="17.8" fill="#cdcdcd"/>
<rect x="368" y="780.2" width="1.9" height="17.8" fill="#cdcdcd"/>
<rect x="394.9" y="781.7" width="4" height="13.3" fill="#cdcdcd"/><path d="M412.7 781.7 V795 L400 788.3 Z" fill="#cdcdcd"/>
<path d="M426 788.3 L438 781.7 V795 Z" fill="#cdcdcd"/><rect x="441" y="781.7" width="3.8" height="13.3" fill="#cdcdcd"/>
<path d="M458 779.6 V796.5 L474.3 788 Z" fill="#cdcdcd"/>
<rect x="487.9" y="781.7" width="3.2" height="13.3" fill="#cdcdcd"/><path d="M494.4 781.7 V795 L506.8 788.3 Z" fill="#cdcdcd"/>
<path d="M520 781.7 V795 L532.6 788.3 Z" fill="#cdcdcd"/><rect x="534" y="781.7" width="3.7" height="13.3" fill="#cdcdcd"/>
<rect x="568" y="784.7" width="19.2" height="8" fill="#cdcdcd"/><rect x="576.2" y="780.2" width="1.8" height="17.3" fill="#cdcdcd"/>
<rect x="570" y="787.7" width="15.2" height="2" fill="#8a8a8a"/>
<path d="M601.5 787.5 V798 H622.5 V792" fill="none" stroke="#cdcdcd" stroke-width="3"/>
<path d="M601.5 790 V787.5 H612" fill="none" stroke="#cdcdcd" stroke-width="3"/>
<path d="M612 783.2 L619 787.5 L612 791.8 Z" fill="#cdcdcd"/>
<rect x="607" y="786" width="5" height="3" fill="#cdcdcd"/>
<rect x="653.6" y="779.6" width="2" height="2" fill="#bdbdbd"/>
<rect x="656.2" y="779.6" width="2" height="2" fill="#bdbdbd"/>
<rect x="658.8" y="779.6" width="2" height="2" fill="#bdbdbd"/>
<rect x="653.6" y="782.2" width="2" height="2" fill="#bdbdbd"/>
<rect x="656.2" y="782.2" width="2" height="2" fill="#bdbdbd"/>
<rect x="653.6" y="784.8" width="2" height="2" fill="#bdbdbd"/>
<rect x="658.8" y="784.8" width="2" height="2" fill="#bdbdbd"/>
<rect x="656.2" y="787.4" width="2" height="2" fill="#bdbdbd"/>
<rect x="659" y="785" width="12.3" height="12.9" fill="#cdcdcd"/>
<rect x="657" y="783" width="2" height="2" fill="#bdbdbd"/>
<rect x="685" y="782.3" width="10" height="9.5" fill="none" stroke="#cdcdcd" stroke-width="1.8"/>
<rect x="691" y="787.5" width="10.2" height="9.2" fill="#474747" stroke="#cdcdcd" stroke-width="1.8"/>
<rect x="715" y="780" width="8" height="16" fill="#b0b0b0"/>
<rect x="721" y="784" width="8" height="15.5" fill="#cdcdcd"/>
<rect x="717" y="791" width="2" height="2" fill="#333"/><rect x="724" y="795" width="2" height="2" fill="#333"/>
<path d="M747 780.2 H744.8 V797.5 H747 M760.5 780.2 H762.7 V791" fill="none" stroke="#cdcdcd" stroke-width="2.2"/>
<circle cx="753.5" cy="788.5" r="1.8" fill="#cdcdcd"/>
<path d="M754.5 793 H764 L759.25 799.5 Z" fill="#cdcdcd"/>
<text x="795.8" y="794.5" font-size="17" fill="#dcb43c" stroke="#dcb43c" stroke-width="0.4">24</text>
<line x1="796.5" y1="798.3" x2="815" y2="798.3" stroke="#dcb43c" stroke-width="1.2" stroke-dasharray="1.5 1.6"/>
<text x="852.5" y="794.5" font-size="17" fill="#8a8a8a" stroke="#8a8a8a" stroke-width="0.3">24.00 fps</text>
<line x1="853" y1="798.3" x2="899" y2="798.3" stroke="#7a7a7a" stroke-width="1.2" stroke-dasharray="1.5 1.6"/>
<text x="936.5" y="794.5" font-size="17" fill="#d8b03a" stroke="#d8b03a" stroke-width="0.4">1.0</text>
<line x1="937" y1="798.3" x2="957" y2="798.3" stroke="#dcb43c" stroke-width="1.2" stroke-dasharray="1.5 1.6"/>
<circle cx="968" cy="789.5" r="9.8" fill="none" stroke="#1e1e1e" stroke-width="1.4"/>
<path d="M968 781.4 A8.1 8.1 0 0 1 968 797.6" fill="none" stroke="#d2d2d2" stroke-width="3"/>
<circle cx="967" cy="789.5" r="6" fill="#3a3a3a"/>
<text x="963" y="794.3" font-size="12.5" font-weight="bold" fill="#e6e6e6">S</text>
<path d="M959 791 L961.5 795 L964.5 787.5" fill="none" stroke="#dcdcdc" stroke-width="1.5"/>
<rect x="957" y="799.3" width="20.5" height="1.8" fill="#d8d8d8"/>
<path d="M995.3 796.5 L1002 789 L1004.5 791 L1006 789.8 L1011.6 796.5 Z" fill="#cdcdcd"/>
<rect x="1032" y="789" width="154.2" height="6.9" fill="#1a1a1a"/>
<rect x="1033.5" y="790.5" width="151.2" height="3.9" fill="#333"/>
<path d="M1070.5 788.5 L1076.5 782.9 L1082.5 788.5 V796.5 H1070.5 Z" fill="#5d5d5d" stroke="#222" stroke-width="1"/>
<path d="M1201.4 796.5 L1213 784.5 L1219 790 L1223 783.7 L1231.9 796.5 Z" fill="#cdcdcd"/>
<path d="M1206 793 L1213 786.5 L1217 790.5 L1211 796 Z" fill="#9a9a9a"/>
<rect x="626.5" y="812.7" width="1.8" height="7.6" fill="#111"/>
<rect x="629.9" y="812.7" width="1.8" height="7.6" fill="#111"/>
<rect x="633.3" y="812.7" width="1.8" height="7.6" fill="#111"/>
<rect x="636.7" y="812.7" width="1.8" height="7.6" fill="#111"/>
<rect x="640.1" y="812.7" width="1.8" height="7.6" fill="#111"/>
<rect x="643.5" y="812.7" width="1.8" height="7.6" fill="#111"/>
<rect x="646.9" y="812.7" width="1.8" height="7.6" fill="#111"/>
<rect x="650.3" y="812.7" width="1.8" height="7.6" fill="#111"/>
<rect x="653.7" y="812.7" width="1.8" height="7.6" fill="#111"/>
<rect x="657.1" y="812.7" width="1.8" height="7.6" fill="#111"/>
</svg>
</body></html>
